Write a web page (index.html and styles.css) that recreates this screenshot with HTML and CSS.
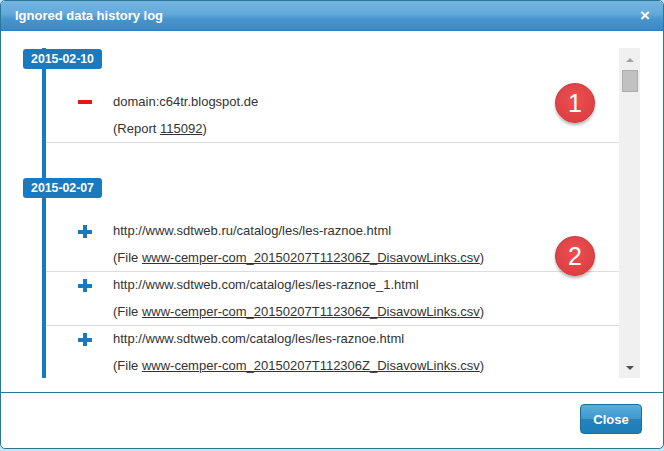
FILE: index.html
```html
<!DOCTYPE html>
<html lang="en">
<head>
    <meta charset="UTF-8">
    <title>Ignored data history log</title>
    <link rel="stylesheet" href="styles.css">
</head>
<body>
    <div class="dialog">
        <!-- Title bar -->
        <div class="titlebar">
            <span class="title">Ignored data history log</span>
            <span class="close-x">&times;</span>
        </div>

        <!-- Scrollable log -->
        <div class="content">
            <div class="log">
                <div class="timeline">
                    <div class="day">
                        <div class="date">2015-02-10</div>
                        <div class="entry">
                            <span class="icon"><span class="minus"></span></span>
                            <div class="text">
                                <p>domain:c64tr.blogspot.de</p>
                                <p>(Report <a href="#">115092</a>)</p>
                            </div>
                        </div>
                    </div>
                    <div class="day">
                        <div class="date">2015-02-07</div>
                        <div class="entry">
                            <span class="icon"><span class="plus"></span></span>
                            <div class="text">
                                <p>http://www.sdtweb.ru/catalog/les/les-raznoe.html</p>
                                <p>(File <a href="#">www-cemper-com_20150207T112306Z_DisavowLinks.csv</a>)</p>
                            </div>
                        </div>
                        <div class="entry">
                            <span class="icon"><span class="plus"></span></span>
                            <div class="text">
                                <p>http://www.sdtweb.com/catalog/les/les-raznoe_1.html</p>
                                <p>(File <a href="#">www-cemper-com_20150207T112306Z_DisavowLinks.csv</a>)</p>
                            </div>
                        </div>
                        <div class="entry">
                            <span class="icon"><span class="plus"></span></span>
                            <div class="text">
                                <p>http://www.sdtweb.com/catalog/les/les-raznoe.html</p>
                                <p>(File <a href="#">www-cemper-com_20150207T112306Z_DisavowLinks.csv</a>)</p>
                            </div>
                        </div>
                    </div>
                </div>
            </div>

            <div class="scrollbar">
                <span class="arrow up"></span>
                <span class="thumb"></span>
                <span class="spacer"></span>
                <span class="arrow down"></span>
            </div>

            <!-- Annotation markers -->
            <span class="marker marker-1">1</span>
            <span class="marker marker-2">2</span>
        </div>

        <!-- Footer -->
        <div class="footer">
            <button class="btn-close">Close</button>
        </div>
    </div>
</body>
</html>
```

FILE: styles.css
```css
body {
    margin: 0;
    background: #c4e5f3;
    font-family: 'Liberation Sans', Arial, sans-serif;
    font-size: 13px;
    color: #333;
}
.dialog {
    box-sizing: border-box;
    width: 664px;
    height: 449px;
    background: #fff;
    border: 1px solid #2b7896;
    border-radius: 5px;
    display: flex;
    flex-direction: column;
    overflow: hidden;
}
.titlebar {
    box-sizing: border-box;
    height: 30px;
    flex: none;
    display: flex;
    align-items: center;
    justify-content: space-between;
    padding: 0 13px 0 14px;
    background: linear-gradient(to bottom, #74b5e0 0%, #63a9da 45%, #4894ce 62%, #3a89c7 100%);
    border-bottom: 1px solid #2f7fbe;
    border-radius: 4px 4px 0 0;
    color: #fff;
}
.title {
    font-size: 13px;
    font-weight: bold;
}
.close-x {
    font-size: 17px;
    font-weight: bold;
    line-height: 1;
}
.content {
    position: relative;
    display: flex;
    height: 330px;
    margin: 17px 23px 0 13px;
    flex: none;
}
.log {
    flex: 1;
    overflow: hidden;
}
.timeline {
    margin-left: 28px;
    border-left: 4px solid #1a7ac0;
    padding-top: 1px;
    min-height: 100%;
}
.day {
    margin-bottom: 35px;
}
.date {
    width: 79px;
    height: 20px;
    margin-left: -23px;
    margin-bottom: 20px;
    background: #1a7ac0;
    color: #fff;
    border-radius: 3px;
    font-size: 12.3px;
    font-weight: bold;
    line-height: 20px;
    text-align: center;
}
.entry {
    display: flex;
    border-bottom: 1px solid #ddd;
}
.icon {
    width: 67px;
    flex: none;
    position: relative;
}
.minus {
    position: absolute;
    left: 32px;
    top: 11px;
    width: 14px;
    height: 4px;
    background: #e8141b;
}
.plus {
    position: absolute;
    left: 32px;
    top: 7px;
    width: 14px;
    height: 13px;
    background:
        linear-gradient(#1a7ac0, #1a7ac0) center / 14px 4px no-repeat,
        linear-gradient(#1a7ac0, #1a7ac0) center / 4px 13px no-repeat;
}
.text p {
    margin: 0;
    line-height: 26.5px;
    white-space: nowrap;
}
.text a {
    color: #333;
    text-decoration: underline;
}
.scrollbar {
    width: 21px;
    flex: none;
    background: #f0f0f0;
    display: flex;
    flex-direction: column;
    align-items: center;
}
.arrow {
    width: 0;
    height: 0;
    border-left: 4px solid transparent;
    border-right: 4px solid transparent;
}
.arrow.up {
    margin-top: 10px;
    border-bottom: 4px solid #a3a3a3;
}
.arrow.down {
    margin-bottom: 8px;
    border-top: 4px solid #505050;
}
.thumb {
    box-sizing: border-box;
    width: 16px;
    height: 22px;
    margin-top: 8px;
    background: #c1c1c1;
    border: 1px solid #acacac;
}
.spacer {
    flex: 1;
}
.marker {
    position: absolute;
    left: 541px;
    width: 38px;
    height: 38px;
    border-radius: 50%;
    background: radial-gradient(circle at 50% 40%, #ea5052, #d93a3d);
    border: 1px solid #c9393b;
    box-shadow: 0 2px 3px rgba(0, 0, 0, 0.3);
    color: #fff;
    font-size: 25px;
    line-height: 38px;
    text-align: center;
}
.marker-1 {
    top: 35px;
}
.marker-2 {
    top: 188px;
}
.footer {
    flex: 1;
    border-top: 1px solid #2b7896;
    margin-top: 14px;
    display: flex;
    justify-content: flex-end;
    align-items: flex-start;
    padding: 11px 21px 0 0;
}
.btn-close {
    width: 62px;
    height: 30px;
    border: 1px solid #1b6e9e;
    border-radius: 4px;
    background: linear-gradient(to bottom, #5aaed9 0%, #3f9acd 48%, #2283bd 52%, #1d7db7 100%);
    color: #fff;
    font-family: 'Liberation Sans', Arial, sans-serif;
    font-size: 13px;
    font-weight: bold;
    cursor: pointer;
}
```
